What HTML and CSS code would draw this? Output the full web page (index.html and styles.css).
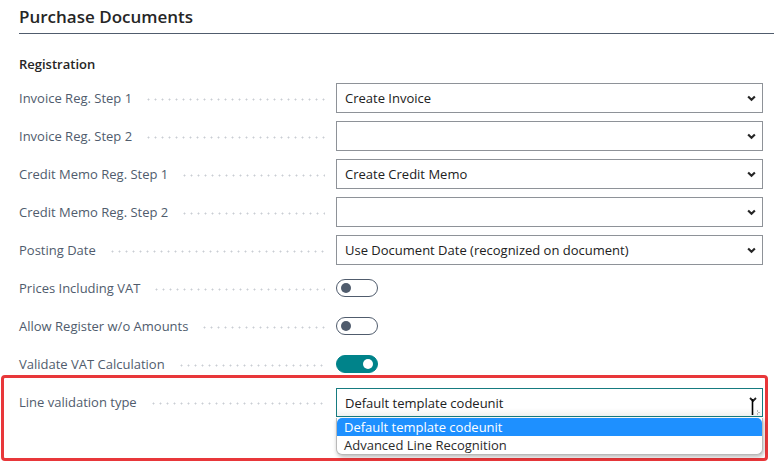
FILE: index.html
```html
<!DOCTYPE html>
<html lang="en">
<head>
<meta charset="utf-8">
<title>Purchase Documents</title>
<link rel="stylesheet" href="styles.css">
</head>
<body>
<div class="page">
  <h1 class="title">Purchase Documents</h1>
  <div class="section">
    <div class="group-title">Registration</div>

    <div class="row">
      <div class="label"><span>Invoice Reg. Step 1</span><i class="dots"></i></div>
      <div class="select"><span>Create Invoice</span><svg class="chev" viewBox="0 0 8 6"><path d="M1 1.2 L4 4.2 L7 1.2" /></svg></div>
    </div>
    <div class="row">
      <div class="label"><span>Invoice Reg. Step 2</span><i class="dots"></i></div>
      <div class="select"><span></span><svg class="chev" viewBox="0 0 8 6"><path d="M1 1.2 L4 4.2 L7 1.2" /></svg></div>
    </div>
    <div class="row">
      <div class="label"><span>Credit Memo Reg. Step 1</span><i class="dots"></i></div>
      <div class="select"><span>Create Credit Memo</span><svg class="chev" viewBox="0 0 8 6"><path d="M1 1.2 L4 4.2 L7 1.2" /></svg></div>
    </div>
    <div class="row">
      <div class="label"><span>Credit Memo Reg. Step 2</span><i class="dots"></i></div>
      <div class="select"><span></span><svg class="chev" viewBox="0 0 8 6"><path d="M1 1.2 L4 4.2 L7 1.2" /></svg></div>
    </div>
    <div class="row">
      <div class="label"><span>Posting Date</span><i class="dots"></i></div>
      <div class="select"><span>Use Document Date (recognized on document)</span><svg class="chev" viewBox="0 0 8 6"><path d="M1 1.2 L4 4.2 L7 1.2" /></svg></div>
    </div>
    <div class="row">
      <div class="label"><span>Prices Including VAT</span><i class="dots"></i></div>
      <div class="field"><span class="toggle"><i class="knob"></i></span></div>
    </div>
    <div class="row">
      <div class="label"><span>Allow Register w/o Amounts</span><i class="dots"></i></div>
      <div class="field"><span class="toggle"><i class="knob"></i></span></div>
    </div>
    <div class="row">
      <div class="label"><span>Validate VAT Calculation</span><i class="dots"></i></div>
      <div class="field"><span class="toggle on"><i class="knob"></i></span></div>
    </div>

    <div class="highlight">
      <div class="row">
        <div class="label"><span>Line validation type</span><i class="dots"></i></div>
        <div class="field menu-anchor">
          <div class="select native"><span>Default template codeunit</span>
            <svg class="cursor" viewBox="0 0 12 20">
              <path class="cur-chev" d="M1 2 L4 5 L7 2" />
              <path class="ibeam" d="M3.5 3 V19" />
              <path class="cur-dots" d="M8 15 h1 M9.5 16.5 h1 M8 18 h1" />
            </svg>
          </div>
          <ul class="menu">
            <li class="active">Default template codeunit</li>
            <li>Advanced Line Recognition</li>
          </ul>
        </div>
      </div>
    </div>
  </div>
</div>
</body>
</html>
```
FILE: styles.css
```css
* { box-sizing: border-box; }
html, body { margin: 0; padding: 0; background: #fff; }
body {
  font-family: "Open Sans", "Noto Sans", "DejaVu Sans", sans-serif;
  font-size: 13px;
  color: #212121;
}
.page { width: 774px; height: 464px; overflow: hidden; }
.title {
  margin: 0 0 0 19px;
  padding-top: 6px;
  height: 34px;
  font-size: 17px;
  font-weight: 600;
  line-height: 22px;
  color: #262626;
  border-bottom: 1px solid #505c6d;
}
.section { padding: 0 11px 0 19px; }
.group-title {
  margin-top: 20px;
  margin-bottom: 5px;
  height: 20px;
  line-height: 20px;
  font-size: 13px;
  font-weight: 600;
  color: #262626;
}
.row {
  display: grid;
  grid-template-columns: 1fr 427px;
  column-gap: 11px;
  height: 38px;
  align-items: center;
}
.label {
  display: flex;
  align-items: center;
  color: #505c6d;
  white-space: nowrap;
}
.dots {
  flex: 1;
  height: 3px;
  margin: 2px 0 0 13px;
  background-image: radial-gradient(circle, #c9cdd3 0.9px, transparent 1.1px);
  background-size: 7px 3px;
  background-repeat: repeat-x;
}
.select {
  position: relative;
  height: 30px;
  border: 1px solid #8e9298;
  background: #fff;
  display: flex;
  align-items: center;
  padding: 0 6px 0 8px;
  color: #212121;
}
.select span { flex: 1; }
.chev { width: 9px; height: 7px; fill: none; stroke: #262626; stroke-width: 1.9; }
.field { display: flex; align-items: center; }
.toggle {
  position: relative;
  width: 42px;
  height: 18px;
  border: 1px solid #505c6d;
  border-radius: 9px;
  background: #fff;
}
.toggle .knob {
  position: absolute;
  left: 4px;
  top: 3px;
  width: 10px;
  height: 10px;
  border-radius: 50%;
  background: #505c6d;
}
.toggle.on { background: #00838a; border-color: #00838a; }
.toggle.on .knob { left: auto; right: 4px; background: #fff; }

.highlight {
  margin: -8px -5px 0 -18px;
  border: 3px solid #e8373a;
  border-radius: 4px;
  padding: 5px 2px 37px 15px;
}
.menu-anchor { position: relative; display: block; }
.select.native {
  height: 29px;
  margin-top: 1px;
  padding-right: 4px;
  border-color: #167b80;
  background: linear-gradient(#fff 70%, #f1f1f1);
}
.cursor {
  width: 12px;
  height: 20px;
  margin-top: 6px;
  margin-right: -3px;
  fill: none;
}
.cur-chev { stroke: #222; stroke-width: 1.8; }
.ibeam { stroke: #000; stroke-width: 1.6; }
.cur-dots { stroke: #777; stroke-width: 1; }
.menu {
  position: absolute;
  left: 0;
  right: 0;
  top: 31px;
  margin: 0;
  padding: 0;
  list-style: none;
  background: #fff;
  border: 1px solid #b9b9b9;
  border-top: none;
  border-radius: 0 0 6px 6px;
  box-shadow: 1px 2px 4px rgba(0, 0, 0, 0.28);
  overflow: hidden;
}
.menu li {
  height: 18px;
  line-height: 18px;
  padding-left: 7px;
  font-size: 13px;
  color: #2b2b2b;
}
.menu li.active {
  background: #1e90ff;
  color: #fff;
  border-radius: 5px 5px 0 0;
}
```
